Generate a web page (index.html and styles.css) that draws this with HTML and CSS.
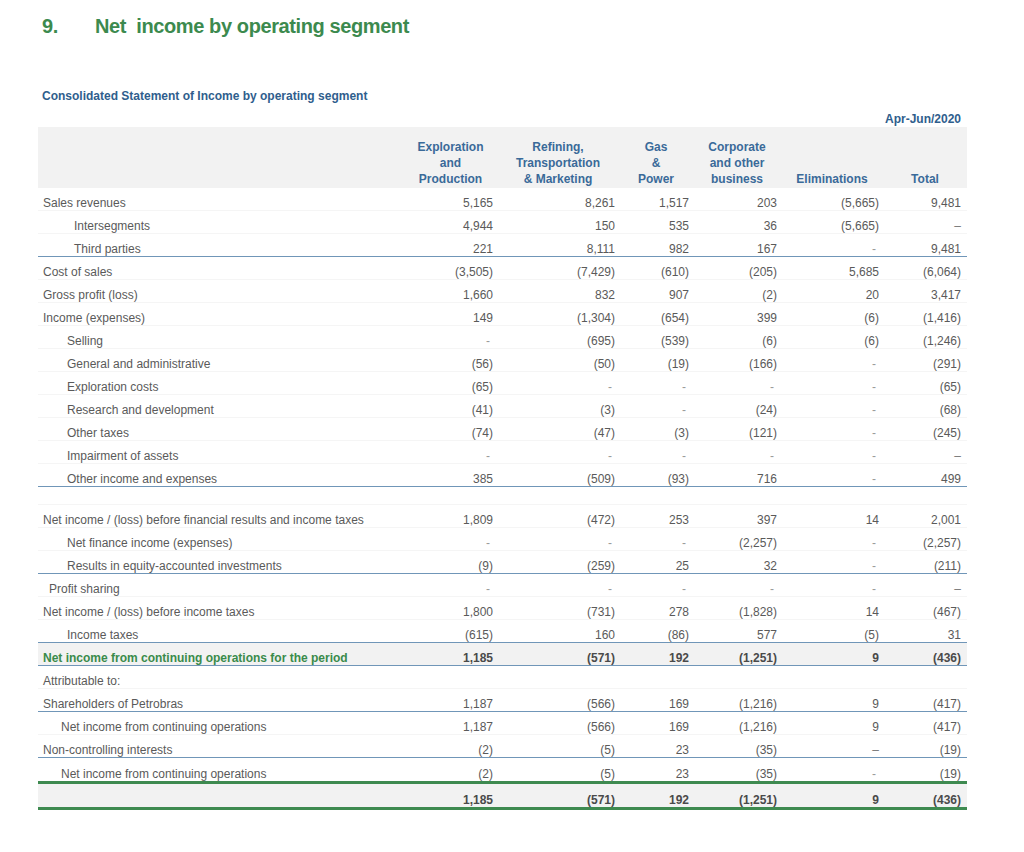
FILE: index.html
```html
<!DOCTYPE html>
<html lang="en">
<head>
<meta charset="utf-8">
<title>Net income by operating segment</title>
<link rel="stylesheet" href="styles.css">
</head>
<body>
<div class="page">
  <h1 class="title"><span class="title-num">9.</span><span>Net&nbsp; income by operating segment</span></h1>
  <h2 class="subtitle">Consolidated Statement of Income by operating segment</h2>
  <div class="period">Apr-Jun/2020</div>
  <table class="seg">
    <colgroup>
      <col class="c-label"><col class="c-ep"><col class="c-rtm"><col class="c-gp"><col class="c-corp"><col class="c-elim"><col class="c-total">
    </colgroup>
    <thead>
      <tr>
        <th class="h-label"></th>
        <th>Exploration<br>and<br>Production</th>
        <th>Refining,<br>Transportation<br>&amp; Marketing</th>
        <th>Gas<br>&amp;<br>Power</th>
        <th>Corporate<br>and other<br>business</th>
        <th>Eliminations</th>
        <th>Total</th>
      </tr>
    </thead>
    <tbody>
      <tr><td class="lbl">Sales revenues</td><td>5,165</td><td>8,261</td><td>1,517</td><td>203</td><td>(5,665)</td><td class="tot">9,481</td></tr>
      <tr><td class="lbl i1">Intersegments</td><td>4,944</td><td>150</td><td>535</td><td>36</td><td>(5,665)</td><td class="tot nd">–</td></tr>
      <tr class="ul"><td class="lbl i1">Third parties</td><td>221</td><td>8,111</td><td>982</td><td>167</td><td class="d">-</td><td class="tot">9,481</td></tr>
      <tr><td class="lbl">Cost of sales</td><td>(3,505)</td><td>(7,429)</td><td>(610)</td><td>(205)</td><td>5,685</td><td class="tot">(6,064)</td></tr>
      <tr><td class="lbl">Gross profit (loss)</td><td>1,660</td><td>832</td><td>907</td><td>(2)</td><td>20</td><td class="tot">3,417</td></tr>
      <tr><td class="lbl">Income (expenses)</td><td>149</td><td>(1,304)</td><td>(654)</td><td>399</td><td>(6)</td><td class="tot">(1,416)</td></tr>
      <tr><td class="lbl i2">Selling</td><td class="d">-</td><td>(695)</td><td>(539)</td><td>(6)</td><td>(6)</td><td class="tot">(1,246)</td></tr>
      <tr><td class="lbl i2">General and administrative</td><td>(56)</td><td>(50)</td><td>(19)</td><td>(166)</td><td class="d">-</td><td class="tot">(291)</td></tr>
      <tr><td class="lbl i2">Exploration costs</td><td>(65)</td><td class="d">-</td><td class="d">-</td><td class="d">-</td><td class="d">-</td><td class="tot">(65)</td></tr>
      <tr><td class="lbl i2">Research and development</td><td>(41)</td><td>(3)</td><td class="d">-</td><td>(24)</td><td class="d">-</td><td class="tot">(68)</td></tr>
      <tr><td class="lbl i2">Other taxes</td><td>(74)</td><td>(47)</td><td>(3)</td><td>(121)</td><td class="d">-</td><td class="tot">(245)</td></tr>
      <tr><td class="lbl i2">Impairment of assets</td><td class="d">-</td><td class="d">-</td><td class="d">-</td><td class="d">-</td><td class="d">-</td><td class="tot nd">–</td></tr>
      <tr class="ul"><td class="lbl i2">Other income and expenses</td><td>385</td><td>(509)</td><td>(93)</td><td>716</td><td class="d">-</td><td class="tot">499</td></tr>
      <tr class="spacer"><td colspan="7"></td></tr>
      <tr><td class="lbl">Net income / (loss) before financial results and income taxes</td><td>1,809</td><td>(472)</td><td>253</td><td>397</td><td>14</td><td class="tot">2,001</td></tr>
      <tr><td class="lbl i2">Net finance income (expenses)</td><td class="d">-</td><td class="d">-</td><td class="d">-</td><td>(2,257)</td><td class="d">-</td><td class="tot">(2,257)</td></tr>
      <tr class="ul"><td class="lbl i2">Results in equity-accounted investments</td><td>(9)</td><td>(259)</td><td>25</td><td>32</td><td class="d">-</td><td class="tot">(211)</td></tr>
      <tr><td class="lbl i3">Profit sharing</td><td class="d">-</td><td class="d">-</td><td class="d">-</td><td class="d">-</td><td class="d">-</td><td class="tot nd">–</td></tr>
      <tr><td class="lbl">Net income / (loss) before income taxes</td><td>1,800</td><td>(731)</td><td>278</td><td>(1,828)</td><td>14</td><td class="tot">(467)</td></tr>
      <tr class="ul"><td class="lbl i2">Income taxes</td><td>(615)</td><td>160</td><td>(86)</td><td>577</td><td>(5)</td><td class="tot">31</td></tr>
      <tr class="ul hl"><td class="lbl key">Net income from continuing operations for the period</td><td>1,185</td><td>(571)</td><td>192</td><td>(1,251)</td><td>9</td><td class="tot">(436)</td></tr>
      <tr><td class="lbl">Attributable to:</td><td></td><td></td><td></td><td></td><td></td><td class="tot"></td></tr>
      <tr class="ul"><td class="lbl">Shareholders of Petrobras</td><td>1,187</td><td>(566)</td><td>169</td><td>(1,216)</td><td>9</td><td class="tot">(417)</td></tr>
      <tr><td class="lbl i4">Net income from continuing operations</td><td>1,187</td><td>(566)</td><td>169</td><td>(1,216)</td><td>9</td><td class="tot">(417)</td></tr>
      <tr class="ul"><td class="lbl">Non-controlling interests</td><td>(2)</td><td>(5)</td><td>23</td><td>(35)</td><td class="nd">–</td><td class="tot">(19)</td></tr>
      <tr class="gl"><td class="lbl i4">Net income from continuing operations</td><td>(2)</td><td>(5)</td><td>23</td><td>(35)</td><td class="d">-</td><td class="tot">(19)</td></tr>
      <tr class="gl hl"><td class="lbl"></td><td>1,185</td><td>(571)</td><td>192</td><td>(1,251)</td><td>9</td><td class="tot">(436)</td></tr>
    </tbody>
  </table>
</div>
</body>
</html>
```
FILE: styles.css
```css
body {
  margin: 0;
  background: #ffffff;
  font-family: "Liberation Sans", Arial, sans-serif;
  color: #5a5a5a;
}

.page {
  width: 929px;
  padding: 14px 0 30px 38px;
}

.title {
  display: flex;
  margin: 0;
  padding-left: 4px;
  font-size: 20px;
  line-height: 24px;
  font-weight: bold;
  letter-spacing: -0.4px;
  color: #3c8a4e;
}

.title-num {
  width: 53px;
}

.subtitle {
  margin: 50px 0 0;
  padding-left: 4px;
  font-size: 12px;
  line-height: 16px;
  font-weight: bold;
  color: #2f5e8d;
}

.period {
  margin-top: 7px;
  padding-right: 6px;
  text-align: right;
  font-size: 12px;
  line-height: 16px;
  font-weight: bold;
  color: #2f5e8d;
}

.seg {
  width: 929px;
  table-layout: fixed;
  border-collapse: separate;
  border-spacing: 0;
  font-size: 12px;
}

.c-label { width: 366px; }
.c-ep { width: 93px; }
.c-rtm { width: 122px; }
.c-gp { width: 74px; }
.c-corp { width: 88px; }
.c-elim { width: 102px; }
.c-total { width: 84px; }

.seg th {
  background: #f2f2f2;
  color: #3a6a99;
  font-weight: bold;
  line-height: 16px;
  padding: 12px 0 1px;
  text-align: center;
  vertical-align: bottom;
}

.seg td {
  padding: 8px 4px 0 0;
  line-height: 14px;
  text-align: right;
  vertical-align: bottom;
  white-space: nowrap;
  border-bottom: 1px solid #f5f5f5;
}

.seg td.tot {
  padding-right: 6px;
}

.seg td.lbl {
  text-align: left;
  padding-left: 5px;
}

.seg td.i1 { padding-left: 36px; }
.seg td.i2 { padding-left: 29px; }
.seg td.i3 { padding-left: 11px; }
.seg td.i4 { padding-left: 23px; }

.seg td.d {
  padding-right: 7px;
  color: #9a9a9a;
}

.seg td.nd {
  color: #777777;
}

.seg td.key {
  color: #3a8b4b;
  font-weight: bold;
}

.seg tr.ul td {
  border-bottom: 1px solid #7096b8;
}

.seg tr.gl td {
  padding-top: 9px;
  border-bottom: 3px solid #3e8a50;
}

.seg tr.hl td {
  background: #f2f2f2;
  font-weight: bold;
  color: #4a4a4a;
}

.seg tr.hl td.key {
  color: #3a8b4b;
}

.seg tr.spacer td {
  height: 17px;
  padding: 0;
}
```
